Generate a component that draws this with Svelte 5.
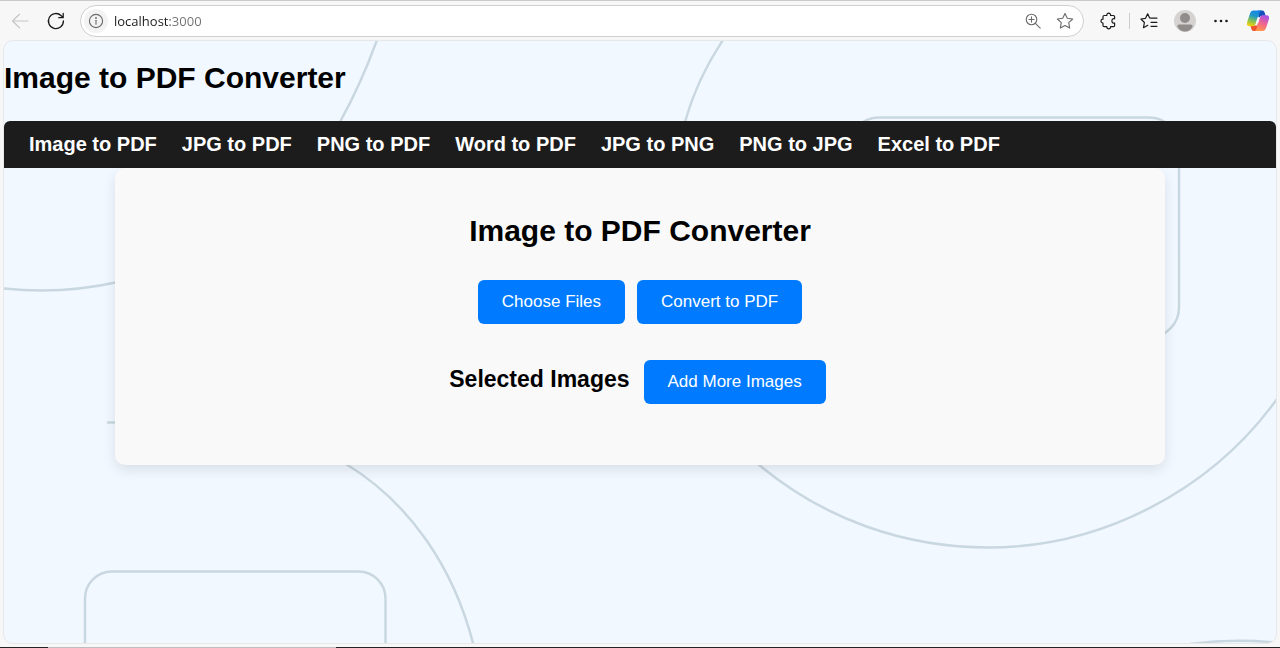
<script>
  const tools = [
    'Image to PDF',
    'JPG to PDF',
    'PNG to PDF',
    'Word to PDF',
    'JPG to PNG',
    'PNG to JPG',
    'Excel to PDF'
  ];
  let address = $state('localhost:3000');
</script>

<div class="browser">
  <div class="toolbar">
    <button class="icon back" aria-label="Back" disabled>
      <svg width="20" height="20" viewBox="0 0 20 20"><path d="M18 10H2.5M9.5 3.2 2.5 10l7 6.8" /></svg>
    </button>
    <button class="icon reload" aria-label="Refresh">
      <svg width="20" height="20" viewBox="0 0 20 20"><path d="M17.4 9.9a7.5 7.5 0 1 1-2.2-5.2l1.6 1.7M17.2 2.4v4.3h-4.4" /></svg>
    </button>
    <div class="address">
      <button class="info" aria-label="View site information">
        <svg width="16" height="16" viewBox="0 0 16 16"><circle cx="8" cy="8" r="6.6" /><path d="M8 7.2v4" /><circle class="dot" cx="8" cy="5" r=".9" /></svg>
      </button>
      <input type="text" aria-label="Address" bind:value={address} spellcheck="false" />
      <button class="icon faint" aria-label="Zoom">
        <svg width="18" height="18" viewBox="0 0 18 18"><circle cx="7.5" cy="7.5" r="5.3" /><path d="m11.4 11.4 4.8 4.8M7.5 4.9v5.2M4.9 7.5h5.2" /></svg>
      </button>
      <button class="icon faint" aria-label="Add to favorites">
        <svg width="18" height="18" viewBox="0 0 18 18"><path d="m9 1.4 2.3 4.9 5.4.7-4 3.7 1 5.4L9 13.5l-4.7 2.6 1-5.4-4-3.7 5.4-.7z" /></svg>
      </button>
    </div>
    <div class="actions">
      <button class="icon" aria-label="Extensions">
        <svg width="18" height="18" viewBox="0 0 18 18"><path d="M4.2 3.5h2.6c-.2-1.4.7-2.3 1.9-2.3s2.1.9 1.9 2.3h2.8q1.2 0 1.2 1.2v2.1c-1.5-.5-2.7.5-2.7 2.1s1.2 2.5 2.7 2.1v2.4q0 1.200-1.200 1.200h-2.800c.1 1.400-.8 2.200-1.900 2.200s-2-.8-1.900-2.200H4.200q-1.200 0-1.200-1.200V11C1.700 11.100 1 10.100 1 9s.7-2.100 2-1.900V4.700q0-1.200 1.200-1.200z" /></svg>
      </button>
      <span class="divider"></span>
      <button class="icon" aria-label="Favorites">
        <svg width="18" height="18" viewBox="0 0 18 18"><path d="M11.3 6.2 9.5 5.8 7.7 1.8 5.500 6.300.9 7l3.500 3.500-.9 5.200 4.300-2.400M10.500 6.200h6.400M11 10.300h5.900M11 14.300h5.900" /></svg>
      </button>
      <button class="icon" aria-label="Profile">
        <svg width="22" height="22" viewBox="0 0 22 22" class="solid"><circle cx="11" cy="11" r="11" fill="#d5d3d1" /><circle cx="11" cy="8" r="5" fill="#8f8c8a" /><path d="M3.300 16.500q0-2 2-2h11.400q2 0 2 2Q16 21.500 11 21.500t-7.700-5z" fill="#8f8c8a" /></svg>
      </button>
      <button class="icon" aria-label="Settings and more">
        <svg width="18" height="18" viewBox="0 0 18 18" class="solid"><circle cx="3.500" cy="9" r="1.300" /><circle cx="9" cy="9" r="1.300" /><circle cx="14.500" cy="9" r="1.300" /></svg>
      </button>
      <button class="icon copilot" aria-label="Copilot">
        <svg width="24" height="24" viewBox="0 0 24 24" class="solid">
          <defs>
            <linearGradient id="cool" x1=".6" y1="0" x2=".3" y2="1"><stop offset="0" stop-color="#1686e8" /><stop offset=".35" stop-color="#2097c8" /><stop offset=".65" stop-color="#7cc05c" /><stop offset="1" stop-color="#f5d20a" /></linearGradient>
            <linearGradient id="warm" x1=".7" y1="0" x2=".3" y2="1"><stop offset="0" stop-color="#a750e8" /><stop offset=".5" stop-color="#f1648e" /><stop offset="1" stop-color="#ff9a45" /></linearGradient>
          </defs>
          <path d="M12 1.500h4.300c1.300 0 1.900.8 2.300 2l1 3.200h-3.200c-1.600 0-2.300.8-2.800 2.300l-1 3z" fill="#1650bd" />
          <path d="M12 22H7.700c-1.300 0-1.900-.8-2.300-2l-1-3.200h3.200c1.600 0 2.300-.8 2.800-2.300l1-3z" fill="#f0522f" />
          <path d="M7.500 1.500h8.200c-1.500.2-2 1.300-2.500 3l-2.700 9c-.7 2.400-1.800 3.700-3.900 3.700H3.500C1 17.200.5 15.300 1.200 13L4 4.500c.7-2 1.700-3 3.500-3z" fill="url(#cool)" />
          <path d="M16.500 22H8.300c1.500-.2 2-1.300 2.500-3l2.700-9c.7-2.400 1.800-3.700 3.900-3.700h3.100c2.500 0 3 1.900 2.300 4.200L20 19c-.7 2-1.700 3-3.500 3z" fill="url(#warm)" />
          <path d="m14 8.200-3.200 8.300h-.9c-.5 0-.7-.5-.5-1.100L11.300 9q.4-1.100 1.300-1z" fill="#f7f7f7" />
        </svg>
      </button>
    </div>
  </div>

  <div class="page">
    <svg class="backdrop" viewBox="4 41 1272 602" preserveAspectRatio="xMidYMid slice" aria-hidden="true">
      <path d="M377 40Q361 84 340 122M0 288Q60 295 118 282M723 40Q697 79 685 122M107 422.500h12" />
      <path d="M346 464C410 503 454 568 473.500 645M758 464C825 520 905 547.500 989 547.500C1100 547.500 1210 492 1277 399" />
      <rect x="85" y="571.500" width="300.500" height="140" rx="27" />
      <rect x="849" y="117.500" width="330" height="220" rx="30" />
      <path d="M1190 644Q1235 638 1280 643" />
    </svg>
    <h1>Image to PDF Converter</h1>
    <nav>
      {#each tools as tool}
        <a href="#converter">{tool}</a>
      {/each}
    </nav>
    <main id="converter">
      <h2>Image to PDF Converter</h2>
      <div class="row">
        <button class="primary">Choose Files</button>
        <button class="primary">Convert to PDF</button>
      </div>
      <div class="row selected">
        <h3>Selected Images</h3>
        <button class="primary">Add More Images</button>
      </div>
    </main>
  </div>
  <div class="taskbar"></div>
</div>

<style>
  :global(body) {
    margin: 0;
  }

  .browser {
    box-sizing: border-box;
    min-height: 100vh;
    display: flex;
    flex-direction: column;
    background: #f7f7f7;
    border-top: 1px solid #c9c9cb;
    font-family: 'Liberation Sans', Arial, sans-serif;
    color: #000;
  }

  button {
    font-family: inherit;
    border: 0;
    margin: 0;
    padding: 0;
    background: none;
  }

  .toolbar {
    display: flex;
    align-items: center;
    padding: 4px 10px 3px;
  }

  .icon {
    display: flex;
    flex: none;
  }

  svg {
    fill: none;
    stroke: #1b1b1b;
    stroke-width: 1.2;
    stroke-linejoin: round;
    stroke-linecap: round;
  }

  svg.solid {
    fill: #1b1b1b;
    stroke: none;
  }

  .back svg {
    stroke: #c6c6c6;
  }

  .reload {
    margin: 0 14px 0 16px;
  }

  .reload svg {
    stroke-width: 1.3;
  }

  .address {
    flex: 1;
    display: flex;
    align-items: center;
    gap: 14px;
    box-sizing: border-box;
    height: 32px;
    padding: 0 9px 0 3px;
    border: 1px solid #cfcfcf;
    border-radius: 16px;
    background: #fff;
  }

  .info {
    display: flex;
    padding: 4px;
    margin-right: -8px;
    border-radius: 50%;
    background: #f3f3f3;
  }

  .info svg,
  .faint svg {
    stroke: #6a6a6a;
    stroke-width: 1.1;
  }

  .info .dot {
    fill: #6a6a6a;
    stroke: none;
  }

  .address input {
    flex: 1;
    min-width: 0;
    border: 0;
    padding: 0;
    outline: 0;
    font: 13px/20px 'Open Sans', 'Noto Sans', sans-serif;
    color: #1b1b1b;
    background: linear-gradient(90deg, #1b1b1b 56px, #707070 56px);
    -webkit-background-clip: text;
    background-clip: text;
    -webkit-text-fill-color: transparent;
  }

  .actions {
    display: flex;
    align-items: center;
    margin-left: 16px;
  }

  .divider {
    width: 1px;
    height: 16px;
    margin: 0 10px 0 11px;
    background: #cdcdcd;
  }

  .actions .icon + .icon {
    margin-left: 16px;
  }

  .page {
    position: relative;
    isolation: isolate;
    flex: 1;
    margin: 0 3px 3px;
    border: 1px solid #e6e8ea;
    border-radius: 10px;
    background: #f2f8ff;
    overflow: hidden;
  }

  .backdrop {
    position: absolute;
    inset: 0;
    z-index: -1;
    width: 100%;
    height: 100%;
    stroke: #c9d7e1;
    stroke-width: 2.5;
    stroke-linecap: butt;
  }

  h1,
  h2 {
    margin: 0;
    font-size: 30px;
    line-height: 34px;
  }

  h1 {
    padding: 20px 0 26px;
  }

  nav {
    display: flex;
    flex-wrap: wrap;
    gap: 0 25px;
    padding: 12px 25px;
    border-radius: 6px 6px 0 0;
    background: #1c1c1c;
  }

  nav a {
    color: #fff;
    font-size: 20px;
    font-weight: 700;
    line-height: 23px;
    text-decoration: none;
  }

  main {
    box-sizing: border-box;
    max-width: 1050px;
    margin: 0 auto;
    padding: 46px 25px 61px;
    border-radius: 10px;
    background: #f9f9f9;
    box-shadow: 0 5px 13px rgba(0, 0, 0, 0.1);
    text-align: center;
  }

  .row {
    display: flex;
    flex-wrap: wrap;
    justify-content: center;
    align-items: baseline;
    gap: 12px;
    margin-top: 32px;
  }

  .selected {
    gap: 14px;
    margin-top: 36px;
    padding-right: 5px;
  }

  h3 {
    margin: 0;
    font-size: 23px;
    line-height: 26px;
  }

  .primary {
    padding: 12px 24px;
    border-radius: 6px;
    background: #007bff;
    color: #fff;
    font-size: 17px;
    line-height: 20px;
    cursor: pointer;
  }

  .taskbar {
    height: 1px;
    background: linear-gradient(90deg, #232323 48px, #bdbdbd 48px, #bdbdbd 336px, #232323 336px);
  }
</style>
